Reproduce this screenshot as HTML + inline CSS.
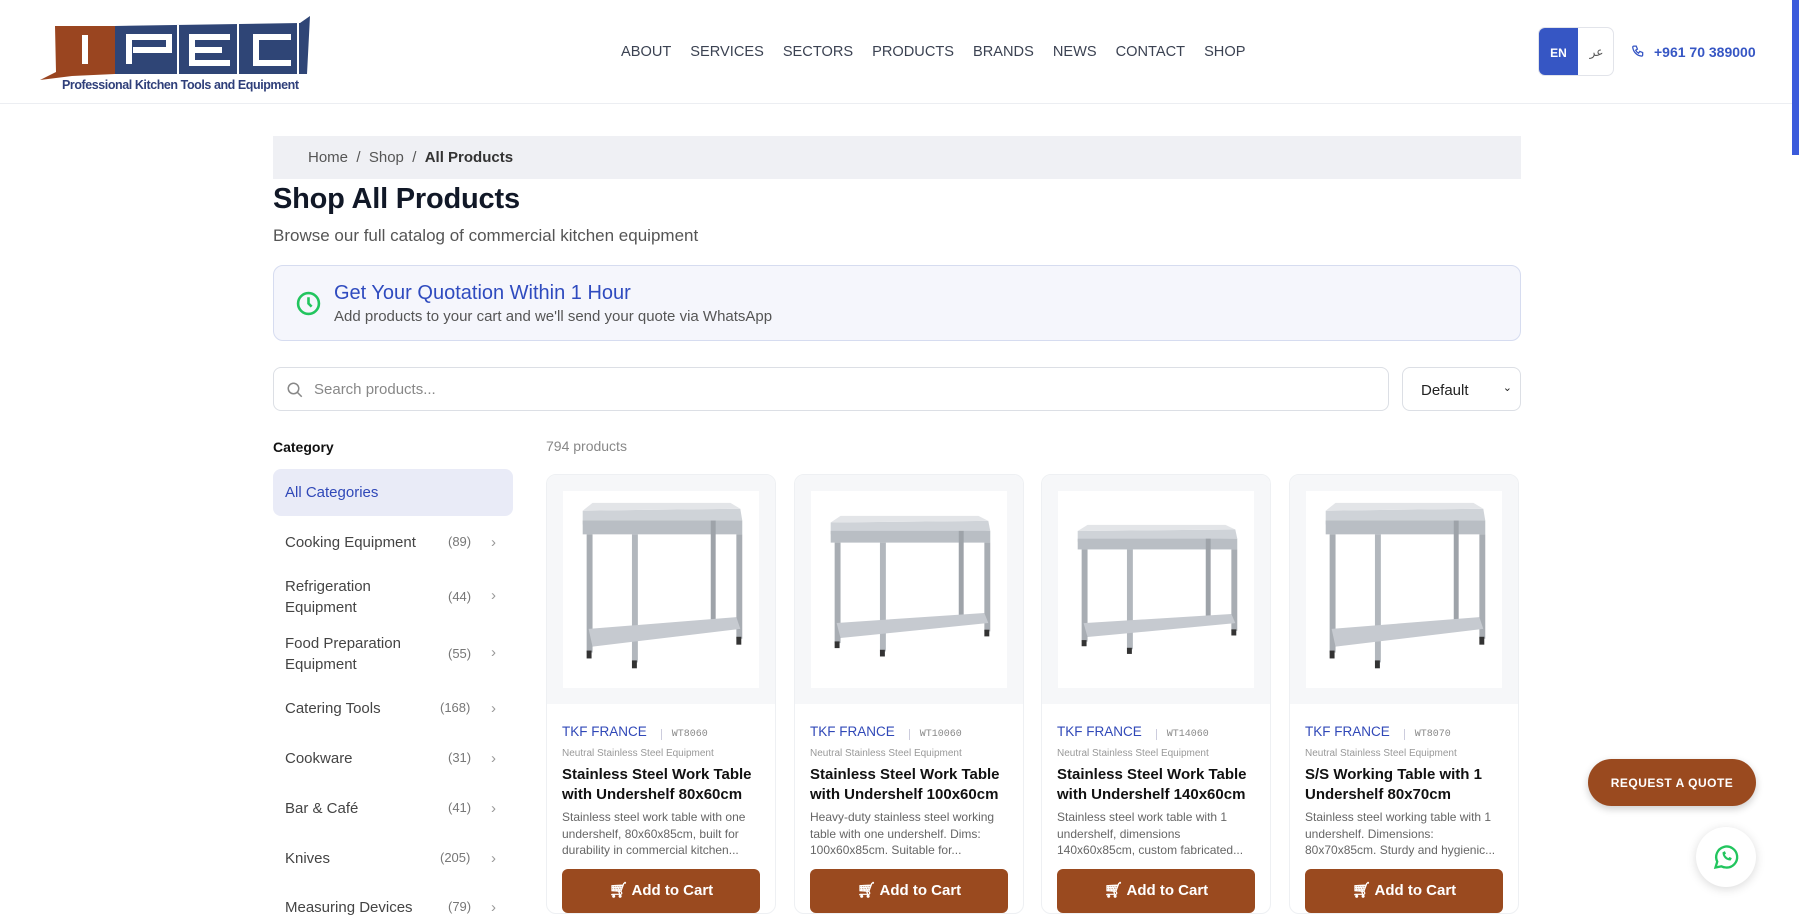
<!DOCTYPE html>
<html><head><meta charset="utf-8"><style>
*{box-sizing:border-box;margin:0;padding:0}
body{width:1799px;height:908px;overflow:hidden;background:#fff;font-family:"Liberation Sans",sans-serif;color:#1f2937;position:relative}
.abs{position:absolute}
header{position:absolute;left:0;top:0;width:1792px;height:104px;border-bottom:1px solid #eceef2;background:#fff}
.nav{position:absolute;top:44px;left:621px;font-size:14.6px;color:#3b4252;display:flex;gap:0}
.nav span{margin-right:19px}
.sb{position:absolute;right:0;top:0;width:7px;height:155px;background:#3b5bdb}
.bc{left:273px;top:136px;width:1248px;height:43px;background:#eff0f4;font-size:15px;color:#555;padding:13px 35px}
.bc b{color:#333}
h1{position:absolute;left:273px;top:183px;font-size:29px;font-weight:900;color:#111827;letter-spacing:-0.2px}
.sub{left:273px;top:226px;font-size:17px;color:#555}
.quote{left:273px;top:265px;width:1248px;height:76px;background:#f5f6fc;border:1px solid #d6dcf0;border-radius:10px}
.search{left:273px;top:367px;width:1116px;height:44px;border:1px solid #dcdfe5;border-radius:8px}
.sel{left:1402px;top:367px;width:119px;height:44px;border:1px solid #dcdfe5;border-radius:8px;font-size:15px;padding:14px 18px;color:#222}
.cat{position:absolute;left:273px;width:240px;font-size:15px;color:#444}
.cat .n{position:absolute;left:175px;font-size:13px;color:#777}
.cat .c{position:absolute;left:218px;color:#999}
.card{position:absolute;top:474px;width:230px;height:440px;border:1px solid #eef0f3;border-radius:10px;background:#fff;overflow:hidden}
.card .im{height:229px;background:#f6f7f9;padding:16px}
.card .im div{background:#fff;height:197px}
.brand{position:absolute;left:15px;top:249px;font-size:13.5px;color:#3048b8}
.brand i{font-style:normal;font-family:"Liberation Mono",monospace;font-size:10px;color:#888;margin-left:14px;padding-left:10px;border-left:1px solid #ccd}
.cc{position:absolute;left:15px;top:273px;font-size:10px;color:#999}
.tt{position:absolute;left:15px;top:290px;font-size:15px;font-weight:bold;color:#111;line-height:20px;width:205px}
.ds{position:absolute;left:15px;top:334px;font-size:12px;color:#666;line-height:16.5px;width:200px}
.btn{position:absolute;left:15px;top:394px;width:198px;height:44px;background:#9a4a1f;border-radius:6px;color:#fff;font-weight:bold;font-size:15px;text-align:center;padding-top:12px}
</style></head><body>
<header>
<svg class="abs" style="left:0;top:0" width="320" height="100" viewBox="0 0 320 100">
<polygon points="55,26 115,26 115,74 72,76 40,80 56,72" fill="#9a4520"/>
<polygon points="115,26 300,23 310,16 307,74 115,74" fill="#2f4576"/>
<rect x="82" y="35" width="6" height="29" fill="#fff"/>
<path d="M129 64V37h40v13h-36" fill="none" stroke="#fff" stroke-width="6"/>
<path d="M230 37h-38v26h38M192 50h30" fill="none" stroke="#fff" stroke-width="6"/>
<path d="M291 37h-35v26h35" fill="none" stroke="#fff" stroke-width="6"/>
<line x1="178" y1="25" x2="178" y2="74" stroke="#fff" stroke-width="2"/>
<line x1="238" y1="24" x2="238" y2="74" stroke="#fff" stroke-width="2"/>
<line x1="298" y1="23" x2="298" y2="74" stroke="#fff" stroke-width="2"/>
<text x="62" y="89" font-family="Liberation Sans" font-weight="bold" font-size="12.5" fill="#2f3f7a" textLength="237">Professional Kitchen Tools and Equipment</text>
</svg>
<div class="nav"><span>ABOUT</span><span>SERVICES</span><span>SECTORS</span><span>PRODUCTS</span><span>BRANDS</span><span>NEWS</span><span>CONTACT</span><span>SHOP</span></div>
<div class="abs" style="left:1538px;top:27px;width:76px;height:49px;border:1px solid #e2e4ea;border-radius:7px;overflow:hidden">
<div class="abs" style="left:0;top:0;width:39px;height:49px;background:#3656c4;color:#fff;font-weight:bold;font-size:12px;text-align:center;padding-top:18px">EN</div>
<div class="abs" style="left:39px;top:0;width:37px;height:49px;color:#555;font-size:12px;text-align:center;padding-top:17px;font-family:'DejaVu Sans',sans-serif">عر</div></div>
<svg class="abs" style="left:1631px;top:45px" width="14" height="14" viewBox="0 0 24 24" fill="none" stroke="#3656c4" stroke-width="2.2"><path d="M5 2h4l2 5-3 2a11 11 0 005 5l2-3 5 2v4a2 2 0 01-2 2A17 17 0 013 4a2 2 0 012-2"/></svg>
<div class="abs" style="left:1654px;top:44px;font-size:14px;font-weight:bold;color:#3656c4">+961 70 389000</div>
</header>
<div class="sb"></div>
<div class="abs bc">Home &nbsp;/&nbsp; Shop &nbsp;/&nbsp; <b>All Products</b></div>
<h1>Shop All Products</h1>
<div class="abs sub">Browse our full catalog of commercial kitchen equipment</div>
<div class="abs quote">
<svg class="abs" style="left:22px;top:25px" width="25" height="25" viewBox="0 0 24 24" fill="none" stroke="#22c55e" stroke-width="2.5"><circle cx="12" cy="12" r="10"/><path d="M12 6v6l3 3"/></svg>
<div class="abs" style="left:60px;top:16px;font-size:20px;color:#2f4bbf">Get Your Quotation Within 1 Hour</div>
<div class="abs" style="left:60px;top:42px;font-size:15px;color:#555">Add products to your cart and we'll send your quote via WhatsApp</div>
</div>
<div class="abs search">
<svg class="abs" style="left:12px;top:13px" width="18" height="18" viewBox="0 0 24 24" fill="none" stroke="#888" stroke-width="2"><circle cx="10" cy="10" r="7"/><path d="M15 15l6 6"/></svg>
<div class="abs" style="left:40px;top:13px;font-size:15px;color:#888">Search products...</div></div>
<div class="abs sel">Default<span style="position:absolute;right:8px;top:13px;font-size:11px">&#8964;</span></div>
<div class="abs" style="left:273px;top:439px;font-size:14px;font-weight:bold;color:#111">Category</div>
<div class="abs" style="left:273px;top:469px;width:240px;height:47px;background:#e9ebf7;border-radius:8px;color:#3048b8;font-size:15px;padding:15px 12px">All Categories</div>
<div class="cat" style="top:534px;padding-left:12px">Cooking Equipment<span class="n">(89)</span><span class="c">›</span></div>
<div class="cat" style="top:576px;padding-left:12px;line-height:21px">Refrigeration<br>Equipment<span class="n" style="top:10px">(44)</span><span class="c" style="top:9px">›</span></div>
<div class="cat" style="top:633px;padding-left:12px;line-height:21px">Food Preparation<br>Equipment<span class="n" style="top:10px">(55)</span><span class="c" style="top:9px">›</span></div>
<div class="cat" style="top:700px;padding-left:12px">Catering Tools<span class="n" style="left:167px">(168)</span><span class="c">›</span></div>
<div class="cat" style="top:750px;padding-left:12px">Cookware<span class="n">(31)</span><span class="c">›</span></div>
<div class="cat" style="top:800px;padding-left:12px">Bar &amp; Café<span class="n">(41)</span><span class="c">›</span></div>
<div class="cat" style="top:850px;padding-left:12px">Knives<span class="n" style="left:167px">(205)</span><span class="c">›</span></div>
<div class="cat" style="top:899px;padding-left:12px">Measuring Devices<span class="n">(79)</span><span class="c">›</span></div>
<div class="abs" style="left:546px;top:438px;font-size:14px;color:#888">794 products</div>

<svg width="0" height="0" style="position:absolute"><defs><g id="tb">
<polygon points="20,20 180,18 182,30 20,34" fill="#cfd3d8"/>
<polygon points="20,20 180,18 170,12 30,12" fill="#e3e5e8"/>
<rect x="20" y="30" width="162" height="14" fill="#b9bec4"/>
<rect x="24" y="44" width="6" height="120" fill="#a8adb3"/><rect x="176" y="44" width="6" height="106" fill="#a8adb3"/>
<rect x="70" y="44" width="6" height="130" fill="#b2b7bd"/><rect x="150" y="30" width="5" height="110" fill="#9ea3a9"/>
<polygon points="26,140 176,128 180,140 30,158" fill="#c6cad0"/>
<rect x="24" y="162" width="5" height="8" fill="#333"/><rect x="70" y="172" width="5" height="8" fill="#333"/><rect x="176" y="148" width="5" height="8" fill="#333"/>
</g></defs></svg>

<div class="card" style="left:546px"><div class="im"><div><svg width="197" height="197" viewBox="0 0 200 200"><use href="#tb"/></svg></div></div>
<div class="brand">TKF FRANCE<i>WT8060</i></div><div class="cc">Neutral Stainless Steel Equipment</div>
<div class="tt">Stainless Steel Work Table with Undershelf 80x60cm</div>
<div class="ds">Stainless steel work table with one undershelf, 80x60x85cm, built for durability in commercial kitchen...</div>
<div class="btn">🛒︎ Add to Cart</div></div>
<div class="card" style="left:794px"><div class="im"><div><svg width="197" height="197" viewBox="0 0 200 200"><g transform="translate(0,15) scale(1,0.85)"><use href="#tb"/></g></svg></div></div>
<div class="brand">TKF FRANCE<i>WT10060</i></div><div class="cc">Neutral Stainless Steel Equipment</div>
<div class="tt">Stainless Steel Work Table with Undershelf 100x60cm</div>
<div class="ds">Heavy-duty stainless steel working table with one undershelf. Dims: 100x60x85cm. Suitable for...</div>
<div class="btn">🛒︎ Add to Cart</div></div>
<div class="card" style="left:1041px"><div class="im"><div><svg width="197" height="197" viewBox="0 0 200 200"><g transform="translate(0,25) scale(1,0.78)"><use href="#tb"/></g></svg></div></div>
<div class="brand">TKF FRANCE<i>WT14060</i></div><div class="cc">Neutral Stainless Steel Equipment</div>
<div class="tt">Stainless Steel Work Table with Undershelf 140x60cm</div>
<div class="ds">Stainless steel work table with 1 undershelf, dimensions 140x60x85cm, custom fabricated...</div>
<div class="btn">🛒︎ Add to Cart</div></div>
<div class="card" style="left:1289px"><div class="im"><div><svg width="197" height="197" viewBox="0 0 200 200"><use href="#tb"/></svg></div></div>
<div class="brand">TKF FRANCE<i>WT8070</i></div><div class="cc">Neutral Stainless Steel Equipment</div>
<div class="tt">S/S Working Table with 1 Undershelf 80x70cm</div>
<div class="ds">Stainless steel working table with 1 undershelf. Dimensions: 80x70x85cm. Sturdy and hygienic...</div>
<div class="btn">🛒︎ Add to Cart</div></div>

<div class="abs" style="left:1588px;top:759px;width:168px;height:47px;background:#9a4a1f;border-radius:24px;color:#fff;font-size:12px;font-weight:bold;text-align:center;padding-top:17px;letter-spacing:0.5px;box-shadow:0 3px 8px rgba(0,0,0,.2)">REQUEST A QUOTE</div>
<div class="abs" style="left:1696px;top:827px;width:60px;height:60px;border-radius:50%;background:#fff;box-shadow:0 2px 10px rgba(0,0,0,.15)">
<svg class="abs" style="left:16px;top:16px" width="28" height="28" viewBox="0 0 24 24" fill="none" stroke="#22c55e" stroke-width="2"><path d="M3 21l1.5-5A9 9 0 1112 21a9 9 0 01-4-1z"/><path d="M9 8c0 4 3 7 7 7l1-2-2-1-1 1c-1-.5-2.5-2-3-3l1-1-1-2z" fill="#22c55e" stroke="none"/></svg></div>
</body></html>
